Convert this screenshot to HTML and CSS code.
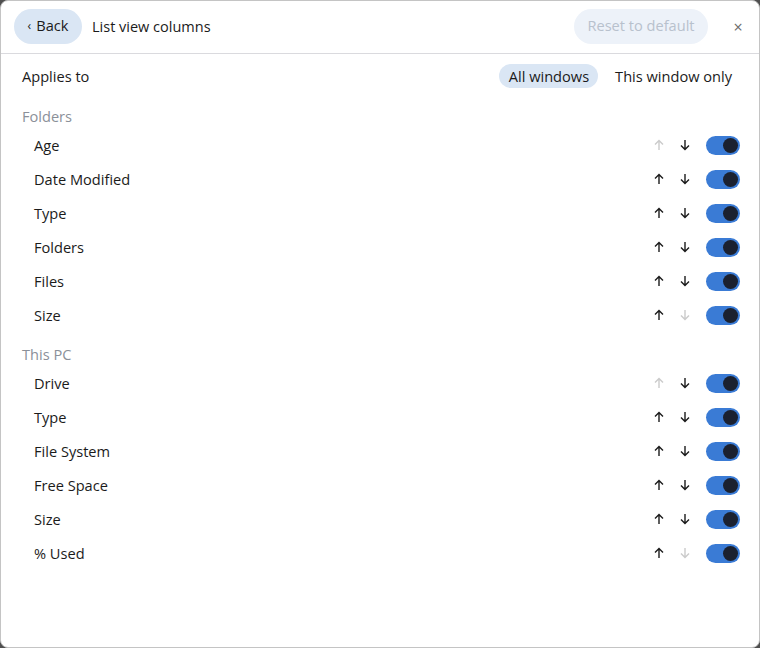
FILE: index.html
```html
<!DOCTYPE html>
<html>
<head>
<meta charset="utf-8">
<link rel="stylesheet" href="styles.css">
</head>
<body>
<div class="window">
  <header class="header">
    <button class="back"><span class="chev">‹</span>Back</button>
    <div class="title">List view columns</div>
    <div class="spacer"></div>
    <button class="reset">Reset to default</button>
    <span class="close">×</span>
  </header>
  <main class="content">
    <div class="applies">
      <span>Applies to</span>
      <div class="seg">
        <span class="seg-btn active">All windows</span>
        <span class="seg-btn">This window only</span>
      </div>
    </div>

    <div class="section-title first">Folders</div>
    <div class="row"><span class="label">Age</span><span class="arrow off"><svg viewBox="0 0 10 12"><path d="M5 11V1.5M1 5.5L5 1.5L9 5.5"/></svg></span><span class="arrow"><svg viewBox="0 0 10 12"><path d="M5 1V10.5M1 6.5L5 10.5L9 6.5"/></svg></span><span class="toggle"><span class="knob"></span></span></div>
    <div class="row"><span class="label">Date Modified</span><span class="arrow"><svg viewBox="0 0 10 12"><path d="M5 11V1.5M1 5.5L5 1.5L9 5.5"/></svg></span><span class="arrow"><svg viewBox="0 0 10 12"><path d="M5 1V10.5M1 6.5L5 10.5L9 6.5"/></svg></span><span class="toggle"><span class="knob"></span></span></div>
    <div class="row"><span class="label">Type</span><span class="arrow"><svg viewBox="0 0 10 12"><path d="M5 11V1.5M1 5.5L5 1.5L9 5.5"/></svg></span><span class="arrow"><svg viewBox="0 0 10 12"><path d="M5 1V10.5M1 6.5L5 10.5L9 6.5"/></svg></span><span class="toggle"><span class="knob"></span></span></div>
    <div class="row"><span class="label">Folders</span><span class="arrow"><svg viewBox="0 0 10 12"><path d="M5 11V1.5M1 5.5L5 1.5L9 5.5"/></svg></span><span class="arrow"><svg viewBox="0 0 10 12"><path d="M5 1V10.5M1 6.5L5 10.5L9 6.5"/></svg></span><span class="toggle"><span class="knob"></span></span></div>
    <div class="row"><span class="label">Files</span><span class="arrow"><svg viewBox="0 0 10 12"><path d="M5 11V1.5M1 5.5L5 1.5L9 5.5"/></svg></span><span class="arrow"><svg viewBox="0 0 10 12"><path d="M5 1V10.5M1 6.5L5 10.5L9 6.5"/></svg></span><span class="toggle"><span class="knob"></span></span></div>
    <div class="row"><span class="label">Size</span><span class="arrow"><svg viewBox="0 0 10 12"><path d="M5 11V1.5M1 5.5L5 1.5L9 5.5"/></svg></span><span class="arrow off"><svg viewBox="0 0 10 12"><path d="M5 1V10.5M1 6.5L5 10.5L9 6.5"/></svg></span><span class="toggle"><span class="knob"></span></span></div>

    <div class="section-title">This PC</div>
    <div class="row"><span class="label">Drive</span><span class="arrow off"><svg viewBox="0 0 10 12"><path d="M5 11V1.5M1 5.5L5 1.5L9 5.5"/></svg></span><span class="arrow"><svg viewBox="0 0 10 12"><path d="M5 1V10.5M1 6.5L5 10.5L9 6.5"/></svg></span><span class="toggle"><span class="knob"></span></span></div>
    <div class="row"><span class="label">Type</span><span class="arrow"><svg viewBox="0 0 10 12"><path d="M5 11V1.5M1 5.5L5 1.5L9 5.5"/></svg></span><span class="arrow"><svg viewBox="0 0 10 12"><path d="M5 1V10.5M1 6.5L5 10.5L9 6.5"/></svg></span><span class="toggle"><span class="knob"></span></span></div>
    <div class="row"><span class="label">File System</span><span class="arrow"><svg viewBox="0 0 10 12"><path d="M5 11V1.5M1 5.5L5 1.5L9 5.5"/></svg></span><span class="arrow"><svg viewBox="0 0 10 12"><path d="M5 1V10.5M1 6.5L5 10.5L9 6.5"/></svg></span><span class="toggle"><span class="knob"></span></span></div>
    <div class="row"><span class="label">Free Space</span><span class="arrow"><svg viewBox="0 0 10 12"><path d="M5 11V1.5M1 5.5L5 1.5L9 5.5"/></svg></span><span class="arrow"><svg viewBox="0 0 10 12"><path d="M5 1V10.5M1 6.5L5 10.5L9 6.5"/></svg></span><span class="toggle"><span class="knob"></span></span></div>
    <div class="row"><span class="label">Size</span><span class="arrow"><svg viewBox="0 0 10 12"><path d="M5 11V1.5M1 5.5L5 1.5L9 5.5"/></svg></span><span class="arrow"><svg viewBox="0 0 10 12"><path d="M5 1V10.5M1 6.5L5 10.5L9 6.5"/></svg></span><span class="toggle"><span class="knob"></span></span></div>
    <div class="row"><span class="label">% Used</span><span class="arrow"><svg viewBox="0 0 10 12"><path d="M5 11V1.5M1 5.5L5 1.5L9 5.5"/></svg></span><span class="arrow off"><svg viewBox="0 0 10 12"><path d="M5 1V10.5M1 6.5L5 10.5L9 6.5"/></svg></span><span class="toggle"><span class="knob"></span></span></div>
  </main>
</div>
</body>
</html>
```
FILE: styles.css
```css
* { box-sizing: border-box; }
html, body { margin: 0; padding: 0; height: 100%; }
body {
  background: #4f4f4f;
  font-family: "Open Sans", "Noto Sans", sans-serif;
  font-size: 14.6px;
  color: #1b1b1b;
}
.window {
  height: 648px;
  width: 760px;
  background: #fff;
  border: 1px solid #c4c4c4;
  border-radius: 8px;
  overflow: hidden;
  display: flex;
  flex-direction: column;
}
.header {
  height: 53px;
  flex: none;
  display: flex;
  align-items: center;
  padding: 0 15px 0 13px;
  border-bottom: 1px solid #dadade;
}
.back {
  height: 35px;
  width: 68px;
  border: none;
  border-radius: 18px;
  background: #dae6f4;
  font: inherit;
  font-size: 14.6px;
  color: #1b1b1b;
  display: flex;
  align-items: center;
  justify-content: center;
  padding: 0 0 2px 0;
  margin-top: -2px;
}
.chev { font-size: 12px; margin-right: 5px; }
.title { margin-left: 10px; font-size: 14.5px; margin-top: -1px; }
.spacer { flex: 1; }
.reset {
  height: 35px;
  width: 134px;
  border: none;
  border-radius: 18px;
  background: #edf2f9;
  color: #b8c1cd;
  font: inherit;
  font-size: 14.6px;
  padding: 0 0 2px 0;
  margin-top: -2px;
}
.close {
  margin-left: 24px;
  color: #6b6b6b;
  font-size: 16px;
  width: 12px;
  text-align: center;
  margin-top: -1px;
}
.content {
  padding: 7px 19px 0 21px;
}
.applies {
  height: 30px;
  display: flex;
  align-items: center;
  justify-content: space-between;
}
.seg { display: flex; gap: 7px; margin-right: -2px; }
.seg-btn {
  height: 24px;
  padding: 0 10px;
  border-radius: 12px;
  display: flex;
  align-items: center;
  padding-bottom: 1px;
}
.seg-btn.active { background: #dae6f4; padding-right: 9px; }
.section-title {
  height: 24px;
  display: flex;
  align-items: center;
  margin-top: 10px;
  color: #8b9099;
}
.section-title.first { margin-top: 13px; }
.row {
  height: 34px;
  display: flex;
  align-items: center;
  padding-left: 12px;
}
.label { flex: 1; }
.arrow {
  width: 26px;
  height: 34px;
  display: flex;
  align-items: center;
  justify-content: center;
}
.arrow svg {
  width: 10px;
  height: 12px;
  fill: none;
  stroke: #1b1b1b;
  stroke-width: 1.4;
}
.arrow.off svg { stroke: #cbcbcb; }
.toggle {
  margin-left: 8px;
  width: 34px;
  height: 19px;
  border-radius: 10px;
  background: #3a7bd5;
  display: flex;
  align-items: center;
  justify-content: flex-end;
  padding-right: 2px;
}
.knob {
  width: 15px;
  height: 15px;
  border-radius: 50%;
  background: #1b2130;
}
```
